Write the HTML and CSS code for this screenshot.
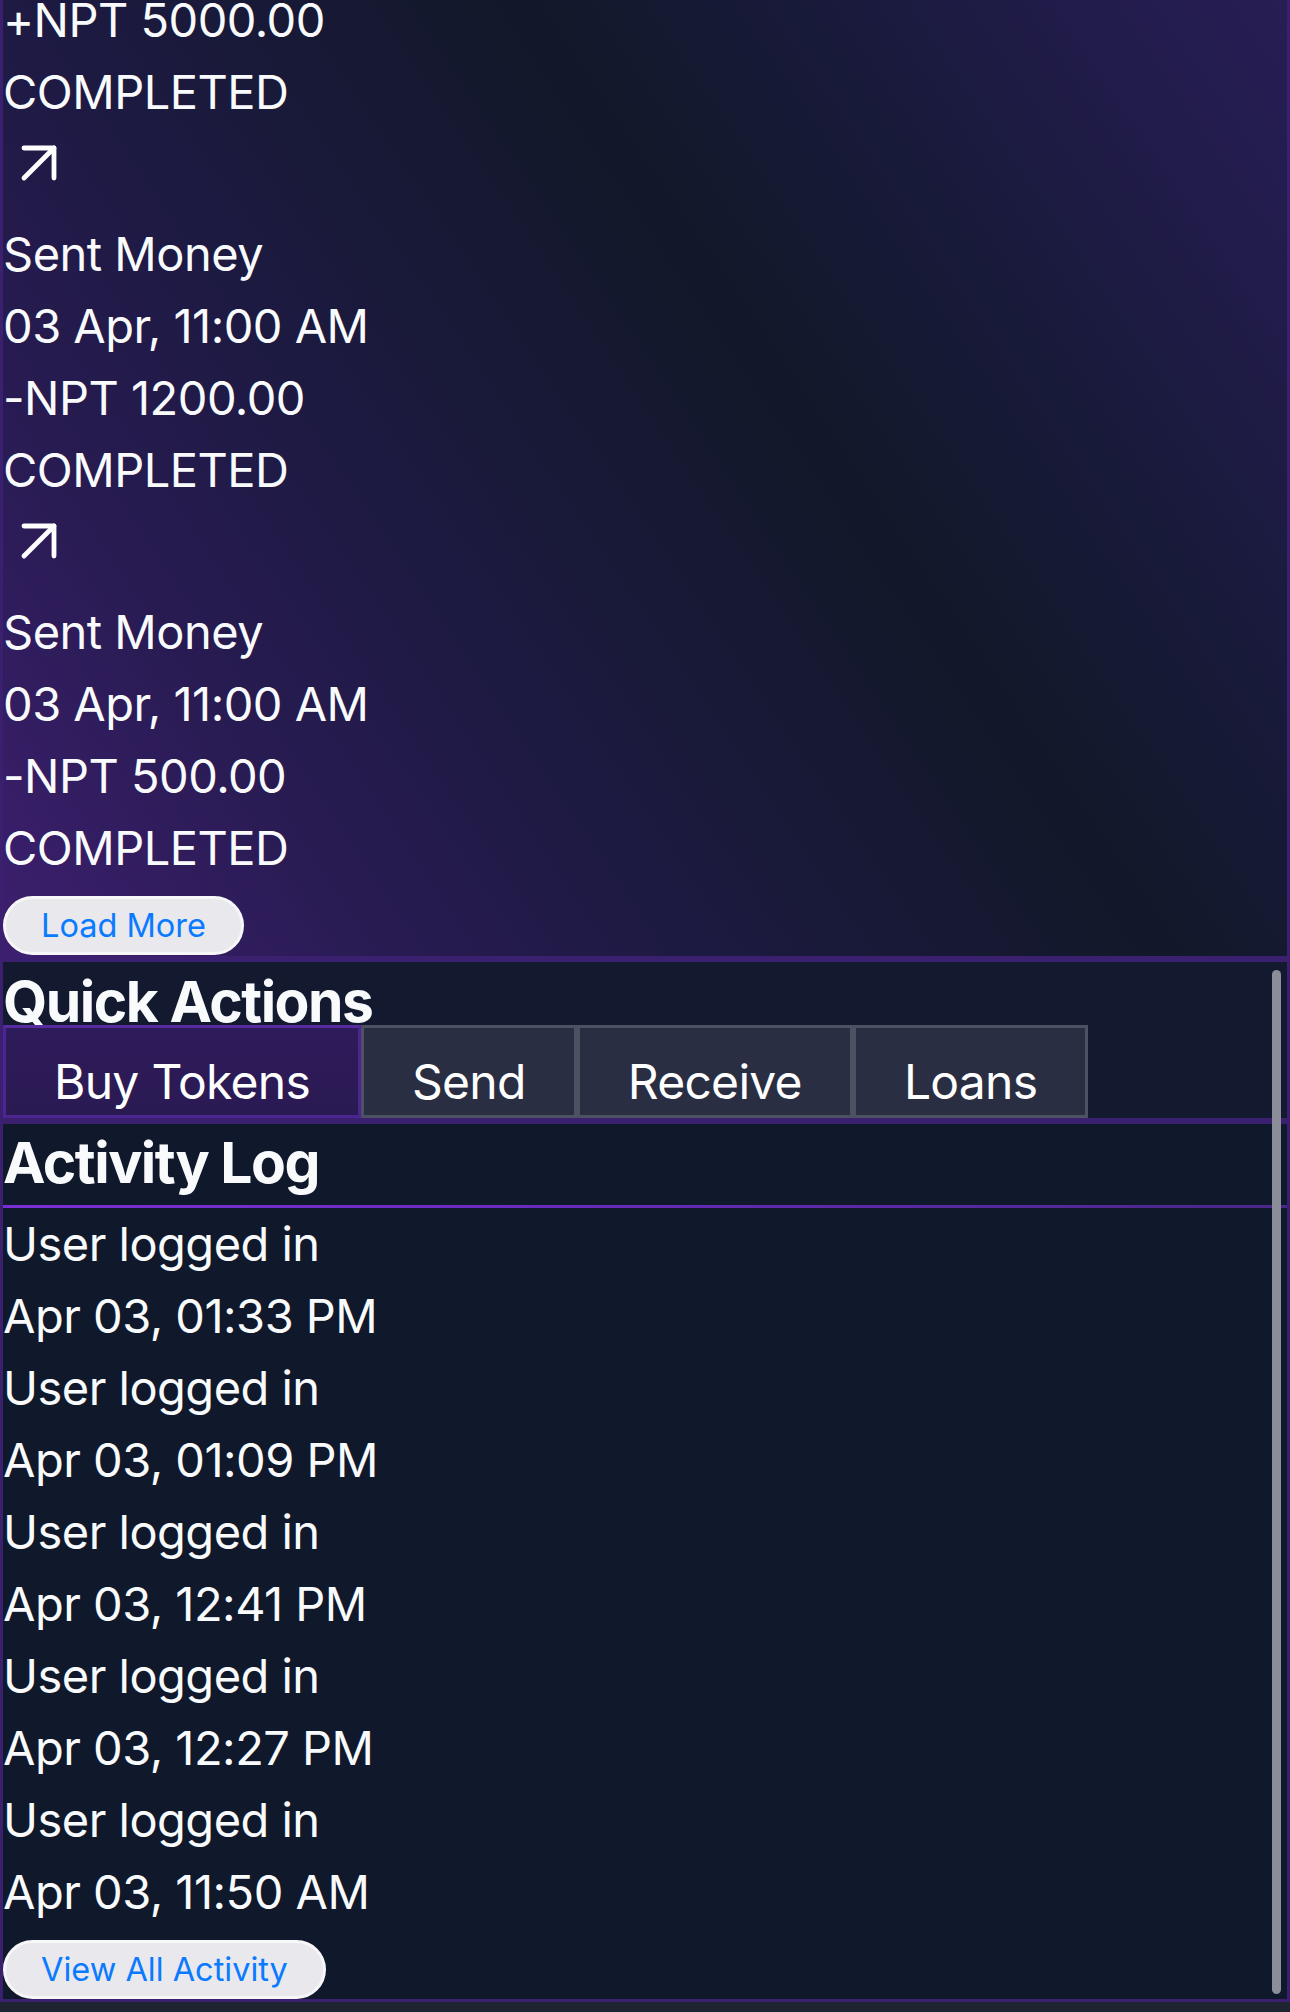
FILE: index.html
```html
<!DOCTYPE html>
<html lang="en">
<head>
<meta charset="utf-8">
<title>Wallet</title>
<link rel="stylesheet" href="styles.css">
</head>
<body>
<main class="page">
  <section class="card tx-card">
    <ul class="tx-list">
      <li class="tx">
        <div class="line">+NPT 5000.00</div>
        <div class="line">COMPLETED</div>
      </li>
      <li class="tx">
        <div class="tx-icon">
          <svg viewBox="0 0 24 24" width="72" height="72" fill="none" stroke="#ffffff" stroke-width="1.6" stroke-linecap="round" stroke-linejoin="round"><path d="M7 17 17 7"/><path d="M7 7h10v10"/></svg>
        </div>
        <div class="line">Sent Money</div>
        <div class="line">03 Apr, 11:00 AM</div>
        <div class="line">-NPT 1200.00</div>
        <div class="line">COMPLETED</div>
      </li>
      <li class="tx">
        <div class="tx-icon">
          <svg viewBox="0 0 24 24" width="72" height="72" fill="none" stroke="#ffffff" stroke-width="1.6" stroke-linecap="round" stroke-linejoin="round"><path d="M7 17 17 7"/><path d="M7 7h10v10"/></svg>
        </div>
        <div class="line">Sent Money</div>
        <div class="line">03 Apr, 11:00 AM</div>
        <div class="line">-NPT 500.00</div>
        <div class="line">COMPLETED</div>
      </li>
    </ul>
    <button class="pill-btn load-more">Load More</button>
  </section>

  <div class="lower">
    <section class="card quick">
      <h2 class="quick-title">Quick Actions</h2>
      <div class="actions">
        <button class="action action-primary">Buy Tokens</button>
        <button class="action">Send</button>
        <button class="action">Receive</button>
        <button class="action">Loans</button>
      </div>
    </section>

    <section class="card activity">
      <h2 class="activity-title">Activity Log</h2>
      <ul class="log-list">
        <li><div class="line">User logged in</div><div class="line">Apr 03, 01:33 PM</div></li>
        <li><div class="line">User logged in</div><div class="line">Apr 03, 01:09 PM</div></li>
        <li><div class="line">User logged in</div><div class="line">Apr 03, 12:41 PM</div></li>
        <li><div class="line">User logged in</div><div class="line">Apr 03, 12:27 PM</div></li>
        <li><div class="line">User logged in</div><div class="line">Apr 03, 11:50 AM</div></li>
      </ul>
      <button class="pill-btn view-all">View All Activity</button>
    </section>
    <div class="scrollbar"></div>
  </div>
</main>
</body>
</html>
```

FILE: styles.css
```css
html, body {
  margin: 0;
  padding: 0;
}

body {
  background: #1f2433;
  font-family: Inter, "Noto Sans", "DejaVu Sans", sans-serif;
  color: #f8fafc;
}

.page {
  width: 1290px;
}

.card {
  border: 3px solid #3b2070;
}

ul {
  list-style: none;
  margin: 0;
  padding: 0;
}

.line {
  font-size: 47px;
  line-height: 72px;
  letter-spacing: -0.011em;
  white-space: nowrap;
}

/* transactions */
.tx-card {
  border-top: 0;
  padding-bottom: 1px;
  overflow: hidden;
  background: linear-gradient(56deg, #3d1f6f 0%, #281b52 20%, #1d1a42 35%, #121829 60%, #181a3a 75%, #221c4c 90%, #271e54 100%);
}

.tx-list {
  margin-top: -16px;
}

.tx-icon {
  height: 91px;
}

.tx-icon svg {
  display: block;
  margin-top: -1px;
}

/* pill buttons */
.pill-btn {
  display: block;
  height: 59px;
  box-sizing: border-box;
  padding: 0 35px;
  border: 3px solid #f7f7f9;
  border-radius: 30px;
  background: #e8e8ed;
  color: #0a7aff;
  font-family: Inter, "Noto Sans", sans-serif;
  font-size: 32.5px;
  line-height: 53px;
}

.load-more {
  margin-top: 12px;
}

.view-all {
  margin-top: 12px;
}

/* lower area */
.lower {
  position: relative;
}

.quick {
  background: #131a2f;
}

.quick-title {
  margin: 0;
  padding-top: 16px;
  font-size: 57px;
  line-height: 47px;
  font-weight: 700;
  letter-spacing: -0.026em;
  color: #f8fafc;
}

.actions {
  display: flex;
}

.action {
  box-sizing: border-box;
  height: 93px;
  padding: 30px 48px 9px;
  border: 3px solid #4d5263;
  background: #2a2e43;
  color: #ffffff;
  font-family: Inter, "Noto Sans", sans-serif;
  font-size: 48px;
  line-height: 48px;
  letter-spacing: -0.015em;
}

.action-primary {
  border-color: #4c2592;
  border-top-color: #5a2aa2;
  background: linear-gradient(180deg, #2e1b5b, #2a1a52);
}

.activity {
  background: #10182b;
}

.activity-title {
  margin: 0;
  padding-bottom: 4px;
  font-size: 57px;
  line-height: 77px;
  font-weight: 700;
  letter-spacing: -0.026em;
  border-bottom: 3px solid #6d2cc4;
  border-image: linear-gradient(90deg, #7a2fd4 0%, #6a2bbf 40%, #4a2788 100%) 1;
}

.scrollbar {
  position: absolute;
  right: 9px;
  top: 11px;
  bottom: 8px;
  width: 9px;
  border-radius: 5px;
  background: #8b8e99;
}
```
